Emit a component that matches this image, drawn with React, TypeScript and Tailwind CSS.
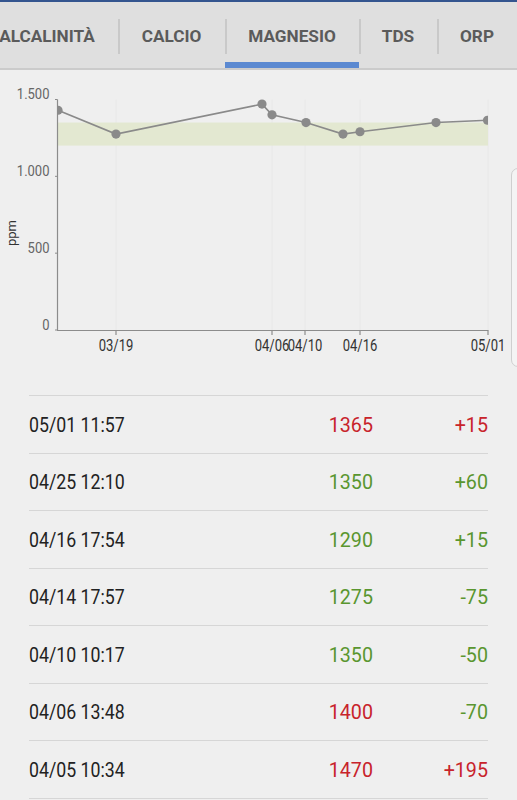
import React from "react";

const tabs = [
  { label: "ALCALINITÀ", w: "w-[142px]" },
  { label: "CALCIO", w: "w-[107px]" },
  { label: "MAGNESIO", w: "w-[134px]", active: true },
  { label: "TDS", w: "w-[78px]" },
  { label: "ORP", w: "w-[80px]" },
];

const RED = "text-[#c8232b]";
const GREEN = "text-[#5a962f]";

const rows = [
  { d: "05/01 11:57", v: "1365", vc: RED, c: "+15", cc: RED },
  { d: "04/25 12:10", v: "1350", vc: GREEN, c: "+60", cc: GREEN },
  { d: "04/16 17:54", v: "1290", vc: GREEN, c: "+15", cc: GREEN },
  { d: "04/14 17:57", v: "1275", vc: GREEN, c: "-75", cc: GREEN },
  { d: "04/10 10:17", v: "1350", vc: GREEN, c: "-50", cc: GREEN },
  { d: "04/06 13:48", v: "1400", vc: RED, c: "-70", cc: GREEN },
  { d: "04/05 10:34", v: "1470", vc: RED, c: "+195", cc: RED },
];

const yOf = (v: number) => 330 - v * (230.5 / 1500);

const pts: [number, number][] = [
  [58, 1430],
  [116, 1275],
  [262, 1470],
  [272, 1400],
  [306, 1350],
  [343, 1275],
  [360, 1290],
  [436, 1350],
  [487.5, 1365],
];

function Chart() {
  const line = pts.map(([x, v]) => `${x},${yOf(v)}`).join(" ");
  const xTicks: [number, string][] = [
    [116, "03/19"],
    [272, "04/06"],
    [305, "04/10"],
    [360, "04/16"],
    [488, "05/01"],
  ];
  const yTicks: [number, string][] = [
    [1500, "1.500"],
    [1000, "1.000"],
    [500, "500"],
    [0, "0"],
  ];
  return (
    <svg
      width={517}
      height={325}
      viewBox="0 70 517 325"
      className="block"
      style={{ fontFamily: "Roboto, 'Liberation Sans', sans-serif" }}
    >
      <defs>
        <clipPath id="plot">
          <rect x={57.5} y={90} width={430.5} height={240} />
        </clipPath>
      </defs>
      {xTicks.map(([x]) => (
        <line key={x} x1={x} y1={99.5} x2={x} y2={330} stroke="#e8e8e8" strokeWidth={1} />
      ))}
      <rect x={57.5} y={yOf(1350)} width={430.5} height={yOf(1200) - yOf(1350)} fill="#e3e8d1" />
      <line x1={57.5} y1={99.5} x2={57.5} y2={330.5} stroke="#8c8c8c" strokeWidth={1.2} />
      <line x1={57} y1={330.5} x2={488.5} y2={330.5} stroke="#8c8c8c" strokeWidth={1.2} />
      {yTicks.map(([v]) => (
        <line key={v} x1={55} y1={yOf(v)} x2={57.5} y2={yOf(v)} stroke="#8c8c8c" strokeWidth={1} />
      ))}
      {xTicks.map(([x]) => (
        <line key={x} x1={x} y1={330.5} x2={x} y2={335} stroke="#8c8c8c" strokeWidth={1.2} />
      ))}
      {yTicks.map(([v, t]) => (
        <text
          key={t}
          transform={`translate(49.5 ${yOf(v) - 0.5}) scale(0.84 1)`}
          textAnchor="end"
          fontSize={15.5}
          fill="#666666"
        >
          {t}
        </text>
      ))}
      {xTicks.map(([x, t]) => (
        <text
          key={t}
          transform={`translate(${x} 350.5) scale(0.79 1)`}
          textAnchor="middle"
          fontSize={16.5}
          fill="#333333"
        >
          {t}
        </text>
      ))}
      <text
        transform="translate(15.5 233) rotate(-90)"
        textAnchor="middle"
        fontSize={13}
        fill="#333333"
      >
        ppm
      </text>
      <g clipPath="url(#plot)">
        <polyline points={line} fill="none" stroke="#8a8a8a" strokeWidth={1.6} />
        {pts.map(([x, v], i) => (
          <circle key={i} cx={x} cy={yOf(v)} r={4.6} fill="#8a8a8a" />
        ))}
      </g>
    </svg>
  );
}

export default function App() {
  return (
    <div
      className="relative w-[517px] h-[800px] overflow-hidden bg-[#efefef]"
      style={{ fontFamily: "Roboto, 'Liberation Sans', sans-serif" }}
    >
      <div className="h-[2px] bg-[#34558f]" />
      <div className="relative h-[68px] bg-[#dfdfdf] border-b-[2px] border-[#cbcbcb] overflow-hidden">
        <div className="flex h-full -ml-[24px]">
          {tabs.map((t, i) => (
            <div key={t.label} className={`relative flex h-full shrink-0 items-center justify-center ${t.w}`}>
              {i > 0 && (
                <div className="absolute left-0 top-[17px] h-[35px] w-[1.5px] bg-[#c9c9c9]" />
              )}
              <span className="pt-[3px] text-[17.2px] font-bold text-[#5b5b5b]">
                {t.label}
              </span>
              {t.active && (
                <div className="absolute left-0 right-0 bottom-0 h-[6px] bg-[#5b89d1]" />
              )}
            </div>
          ))}
        </div>
      </div>

      <Chart />

      <div className="absolute left-[511px] top-[168px] h-[199px] w-[20px] rounded-l-[7px] border border-[#cfcfcf] bg-[#f4f4f4]" />

      <div className="ml-[29px] w-[459px] border-t-[1.5px] border-[#d6d6d6]">
        {rows.map((r) => (
          <div
            key={r.d}
            className="relative flex h-[57.5px] items-center pt-[3px] border-b-[1.5px] border-[#d6d6d6] text-[19.7px]"
          >
            <span className="inline-block origin-left scale-x-[0.9] whitespace-nowrap text-[#222222]">
              {r.d}
            </span>
            <span className={`absolute right-[115px] whitespace-nowrap ${r.vc}`}>{r.v}</span>
            <span className={`absolute right-0 whitespace-nowrap ${r.cc}`}>{r.c}</span>
          </div>
        ))}
      </div>
    </div>
  );
}
